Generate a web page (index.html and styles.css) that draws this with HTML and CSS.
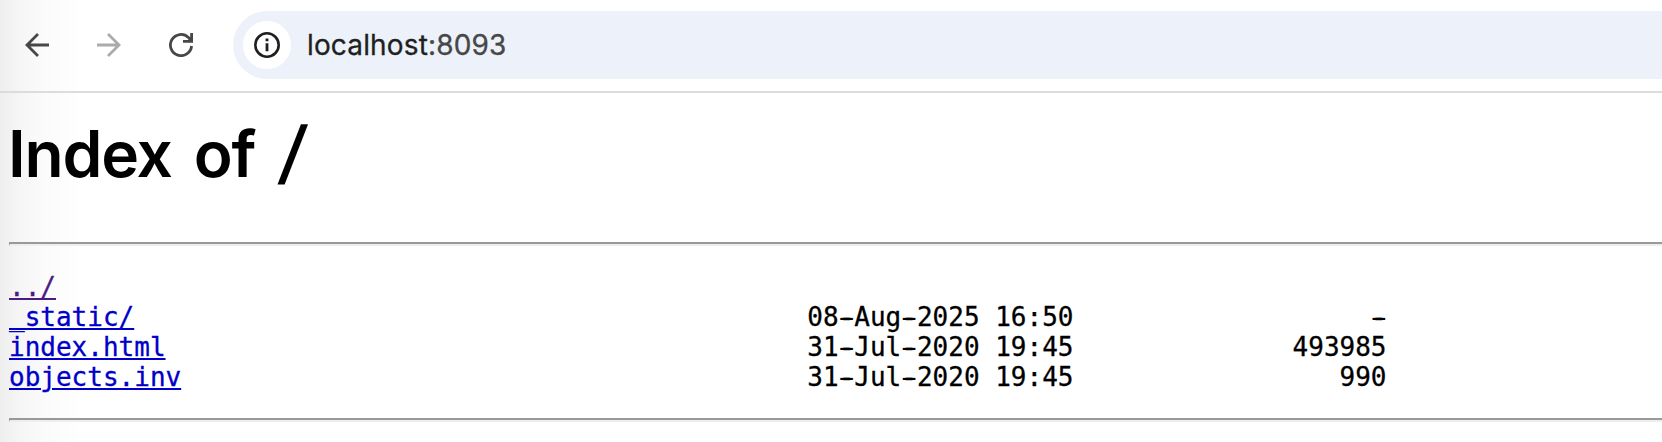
FILE: index.html
```html
<!DOCTYPE html>
<html lang="en">
<head>
<meta charset="utf-8">
<title>Index of /</title>
<link rel="stylesheet" href="styles.css">
</head>
<body>
<header class="toolbar">
  <svg class="icon" width="24" height="24" viewBox="0 0 24 24"><path d="M24 12H2M13 1L2 12l11 11"/></svg>
  <svg class="icon disabled" width="24" height="24" viewBox="0 0 24 24"><path d="M0 12h22M11 1l11 11-11 11"/></svg>
  <svg class="icon" width="24" height="24" viewBox="0 0 24 24"><path d="M22.6 13A10.6 10.6 0 1 1 19.4 4.4L22 7.5M14 8.4h8.6V0"/></svg>
  <div class="omnibox">
    <span class="site-info"><svg width="26" height="26" viewBox="0 0 26 26"><circle class="ring" cx="13" cy="13" r="11.7"/><path class="mark" d="M11.6 6.6h2.8v2.6h-2.8zM11.6 11.2h2.8v8h-2.8z"/></svg></span>
    <span class="url">localhost<span class="port">:8093</span></span>
  </div>
</header>
<main class="listing">
  <h1 class="title">Index of <span class="slash">/</span></h1>
  <hr class="rule">
<pre class="files"><a class="link visited" href="#up">../</a>
<a class="link" href="#static">_static/</a>                                           08<span class="dash">-</span>Aug<span class="dash">-</span>2025 16:50                   <span class="dash">-</span>
<a class="link" href="#index">index.html</a>                                         31<span class="dash">-</span>Jul<span class="dash">-</span>2020 19:45              493985
<a class="link" href="#objects">objects.inv</a>                                        31<span class="dash">-</span>Jul<span class="dash">-</span>2020 19:45                 990
</pre>
  <hr class="rule">
</main>
</body>
</html>
```
FILE: styles.css
```css
* { box-sizing: border-box; }
body {
  margin: 0;
  height: 442px;
  overflow: hidden;
  color: #000;
  background: linear-gradient(90deg, #eee 0, #f5f5f5 18px, #fbfbfb 45px, #fefefe 78px, #fff 79px);
}
.toolbar {
  display: flex;
  align-items: center;
  height: 93px;
  padding: 0 0 1px 25px;
  border-bottom: 2px solid #dcdcdd;
}
.icon {
  flex: none;
  margin-right: 48px;
  fill: none;
  stroke: #474747;
  stroke-width: 2.8;
}
.icon.disabled { stroke: #ababab; }
.icon:nth-of-type(3) { margin-right: 40px; }
.omnibox {
  display: flex;
  flex: 1;
  align-items: center;
  height: 68px;
  padding-left: 10px;
  border-radius: 34px 0 0 34px;
  background: #edf2fa;
}
.site-info {
  display: grid;
  place-items: center;
  width: 48px;
  height: 48px;
  border-radius: 50%;
  background: #fff;
}
.ring { fill: none; stroke: #1f1f1f; stroke-width: 2.6; }
.mark { fill: #1f1f1f; }
.url {
  margin-left: 16px;
  font: 28px/34px Inter, sans-serif;
  letter-spacing: 0.15px;
  color: #1f1f1f;
  -webkit-text-stroke: 0.3px;
}
.port { color: #474747; }
.listing { padding-left: 9px; }
.title {
  margin: 0;
  padding-top: 22px;
  font: 600 64px/78px Inter, sans-serif;
  letter-spacing: -1.2px;
  word-spacing: 7px;
  text-indent: -1px;
}
.slash {
  display: inline-block;
  margin-left: 4px;
  text-indent: 0;
  transform: translateY(-2px) skewX(-8deg) scaleY(1.08);
}
.rule {
  height: 4px;
  margin: 0;
  border: solid;
  border-width: 2px 0 2px 1px;
  border-color: #999 transparent #eee #999;
}
.title + .rule { margin-top: 49px; }
.files {
  margin: 26px 0;
  font: 26px/30px "DejaVu Sans Mono", monospace;
  -webkit-text-stroke: 0.3px;
}
/* Widens the hyphen without changing its advance. */
.dash { text-shadow: -3px 0 #000, 3px 0 #000; }
.link {
  color: #0000c8;
  text-decoration: underline;
  text-decoration-thickness: 2px;
  text-underline-offset: 2px;
}
.link.visited { color: #4b1a83; }
```
